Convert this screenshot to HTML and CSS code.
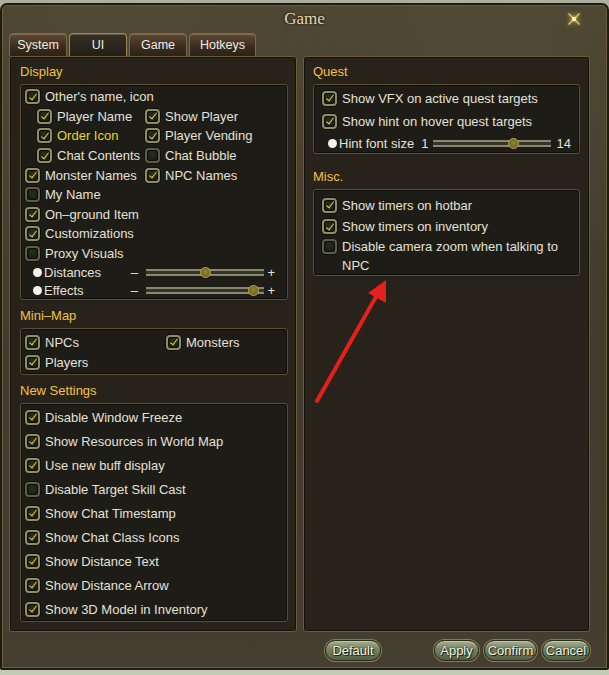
FILE: index.html
```html
<!DOCTYPE html>
<html lang="en">
  <head>
    <meta charset="UTF-8" />
    <meta name="viewport" content="width=device-width, initial-scale=1.0" />
    <title>Game</title>
    <link rel="stylesheet" href="styles.css">
  </head>
  <body>
    <div class="window">
      <div class="titlebar">
        <span class="title">Game</span>
        <svg class="close" width="16" height="16" viewBox="0 0 16 16">
          <path d="M3 3 L13 13 M13 3 L3 13" stroke="#d8c060" stroke-width="1.6" stroke-linecap="round" />
          <circle cx="8" cy="8" r="2.2" fill="#fff6c0" />
        </svg>
      </div>

      <div class="tabs">
        <div class="tab">System</div>
        <div class="tab active">UI</div>
        <div class="tab">Game</div>
        <div class="tab wide">Hotkeys</div>
      </div>

      <div class="content">
        <!-- left column -->
        <div class="panel">
          <h3>Display</h3>
          <div class="box display">
            <div class="row"><span class="cb on"></span>Other's name, icon</div>
            <div class="pair">
              <div class="row sub"><span class="cb on"></span>Player Name</div>
              <div class="row"><span class="cb on"></span>Show Player</div>
              <div class="row sub"><span class="cb on"></span><span class="hl">Order Icon</span></div>
              <div class="row"><span class="cb on"></span>Player Vending</div>
              <div class="row sub"><span class="cb on"></span>Chat Contents</div>
              <div class="row"><span class="cb"></span>Chat Bubble</div>
              <div class="row"><span class="cb on"></span>Monster Names</div>
              <div class="row"><span class="cb on"></span>NPC Names</div>
            </div>
            <div class="row"><span class="cb"></span>My Name</div>
            <div class="row"><span class="cb on"></span>On–ground Item</div>
            <div class="row"><span class="cb on"></span>Customizations</div>
            <div class="row"><span class="cb"></span>Proxy Visuals</div>
            <div class="slider-row">
              <span class="dot"></span><span class="s-label">Distances</span>
              <span class="sign">–</span>
              <span class="track"><span class="knob" style="left: 50%"></span></span>
              <span class="sign">+</span>
            </div>
            <div class="slider-row">
              <span class="dot"></span><span class="s-label">Effects</span>
              <span class="sign">–</span>
              <span class="track"><span class="knob" style="left: 90%"></span></span>
              <span class="sign">+</span>
            </div>
          </div>

          <h3>Mini–Map</h3>
          <div class="box minimap">
            <div class="row"><span class="cb on"></span>NPCs</div>
            <div class="row"><span class="cb on"></span>Monsters</div>
            <div class="row"><span class="cb on"></span>Players</div>
          </div>

          <h3>New Settings</h3>
          <div class="box settings">
            <div class="row"><span class="cb on"></span>Disable Window Freeze</div>
            <div class="row"><span class="cb on"></span>Show Resources in World Map</div>
            <div class="row"><span class="cb on"></span>Use new buff display</div>
            <div class="row"><span class="cb"></span>Disable Target Skill Cast</div>
            <div class="row"><span class="cb on"></span>Show Chat Timestamp</div>
            <div class="row"><span class="cb on"></span>Show Chat Class Icons</div>
            <div class="row"><span class="cb on"></span>Show Distance Text</div>
            <div class="row"><span class="cb on"></span>Show Distance Arrow</div>
            <div class="row"><span class="cb on"></span>Show 3D Model in Inventory</div>
          </div>
        </div>

        <!-- right column -->
        <div class="panel right">
          <h3>Quest</h3>
          <div class="box quest">
            <div class="row"><span class="cb on"></span>Show VFX on active quest targets</div>
            <div class="row"><span class="cb on"></span>Show hint on hover quest targets</div>
            <div class="slider-row">
              <span class="dot"></span><span class="s-label">Hint font size</span>
              <span class="num">1</span>
              <span class="track"><span class="knob" style="left: 68%"></span></span>
              <span class="num end">14</span>
            </div>
          </div>

          <h3 class="misc-title">Misc.</h3>
          <div class="box misc">
            <div class="row"><span class="cb on"></span>Show timers on hotbar</div>
            <div class="row"><span class="cb on"></span>Show timers on inventory</div>
            <div class="row wrap"><span class="cb"></span><span>Disable camera zoom when talking to NPC</span></div>
          </div>
        </div>
      </div>

      <div class="footer">
        <div></div>
        <div class="buttons">
          <button class="btn w-default">Default</button>
          <div class="btn-group">
            <button class="btn w-apply">Apply</button>
            <button class="btn w-confirm">Confirm</button>
            <button class="btn w-cancel">Cancel</button>
          </div>
        </div>
      </div>
    </div>

    <svg class="arrow" width="609" height="675" viewBox="0 0 609 675">
      <line x1="317" y1="401" x2="377" y2="295" stroke="#e5201c" stroke-width="4" stroke-linecap="round" />
      <polygon points="386,280 368,293 386,303" fill="#e5201c" />
    </svg>
  </body>
</html>
```

FILE: styles.css
```css
* {
  margin: 0;
  padding: 0;
  box-sizing: border-box;
}
body {
  width: 609px;
  height: 675px;
  overflow: hidden;
  position: relative;
  background: linear-gradient(#aab09c, #c4cab6);
  font-family: "Liberation Sans", Arial, sans-serif;
  font-size: 13px;
  color: #e4e1d6;
}
.window {
  margin-top: 3px;
  height: 667px;
  border: 2px solid #1f1b13;
  border-radius: 7px 7px 2px 2px;
  background:
    radial-gradient(ellipse at 20% 8%, rgba(90, 84, 62, 0.45), transparent 40%),
    radial-gradient(ellipse at 80% 8%, rgba(90, 84, 62, 0.45), transparent 40%),
    linear-gradient(#48422f, #403a2b 40%, #453f31);
  box-shadow: inset 0 0 0 1px #6a5e40;
  display: flex;
  flex-direction: column;
}
.titlebar {
  height: 28px;
  display: flex;
  align-items: center;
  justify-content: center;
  position: relative;
}
.title {
  font-family: "Liberation Serif", "Times New Roman", serif;
  font-size: 17px;
  color: #e6d6b2;
  text-shadow: 0 0 3px #000;
}
.close {
  position: absolute;
  right: 25px;
  top: 6px;
  filter: drop-shadow(0 0 2px #e0c040);
}

/* tabs */
.tabs {
  height: 23px;
  display: flex;
  gap: 2px;
  padding-left: 7px;
}
.tab {
  width: 58px;
  height: 23px;
  border: 1px solid #7b6741;
  border-bottom: none;
  border-radius: 4px 4px 0 0;
  background: linear-gradient(#5e4834, #3a2c1e 60%, #2c2217);
  display: flex;
  align-items: center;
  justify-content: center;
  font-size: 12.5px;
  color: #f1ede2;
  box-shadow: inset 0 1px 0 rgba(255, 220, 160, 0.25);
}
.tab.wide {
  width: 67px;
}
.tab.active {
  background: linear-gradient(#353024, #231f18);
  border-color: #9a8550;
}

/* panels */
.content {
  height: 576px;
  display: flex;
  gap: 6px;
  padding-left: 7px;
}
.panel {
  width: 288px;
  height: 576px;
  border: 1px solid #6d5c35;
  border-radius: 3px;
  background: #27231b;
  box-shadow: inset 0 0 0 1px #15120c;
  padding: 4px 8px 0 10px;
}
.panel.right {
  width: 287px;
  padding: 4px 9px 0 9px;
}
h3 {
  font-weight: normal;
  font-size: 13px;
  color: #f3c141;
  height: 22px;
  line-height: 22px;
  margin-top: 5px;
  margin-bottom: 1px;
}
h3:first-child {
  margin-top: 0;
}
.misc-title {
  margin-top: 12px;
}
.box {
  border: 1px solid #5a4f33;
  border-radius: 3px;
  background: #1e1c16;
  box-shadow: inset 0 0 0 1px #100e0a;
  padding: 2px 4px;
}
.display {
  padding-bottom: 0;
}
.row {
  display: flex;
  align-items: center;
  height: 19.6px;
  white-space: nowrap;
}
.pair {
  display: grid;
  grid-template-columns: 120px 1fr;
}
.row.sub {
  padding-left: 12px;
}
.hl {
  color: #e6d51e;
}

/* checkbox */
.cb {
  flex: none;
  width: 15px;
  height: 15px;
  margin-right: 5px;
  border: 2px solid #5e5e46;
  border-radius: 4px;
  background: radial-gradient(circle at 50% 40%, #283020, #12150e);
  box-shadow: 0 0 0 1px #12100b, inset 0 0 0 1px #0c0e08;
  position: relative;
}
.cb.on {
  border-color: #8e8d68;
}
.cb.on::after {
  content: "";
  position: absolute;
  left: 3.5px;
  top: 0.5px;
  width: 3px;
  height: 7px;
  border: solid #e7cb31;
  border-width: 0 1.6px 1.6px 0;
  transform: rotate(38deg);
}

/* sliders */
.slider-row {
  display: flex;
  align-items: center;
  height: 18px;
  white-space: nowrap;
}
.dot {
  flex: none;
  width: 9px;
  height: 9px;
  border-radius: 50%;
  background: #f4f2ea;
  margin-left: 8px;
  margin-right: 2px;
}
.display .s-label {
  width: 89px;
}
.sign {
  width: 16px;
}
.track {
  position: relative;
  width: 121px;
  height: 7px;
  border-top: 2px solid #8a876f;
  border-bottom: 2px solid #8a876f;
  background: #36342a;
}
.knob {
  position: absolute;
  top: 50%;
  width: 11px;
  height: 11px;
  margin-left: -5px;
  margin-top: -5.5px;
  border-radius: 50%;
  border: 1px solid #c6a548;
  background: radial-gradient(circle at 50% 45%, #8f8636, #5f5a1e);
}
.slider-row > .sign:last-child {
  margin-left: 3px;
}

/* mini-map */
.minimap {
  display: grid;
  grid-template-columns: 141px 1fr;
  padding-top: 3px;
  padding-bottom: 2px;
}
.minimap .row {
  height: 20px;
}

/* new settings */
.settings {
  padding-top: 1px;
  padding-bottom: 0;
}
.settings .row {
  height: 24px;
}

/* quest */
.quest {
  padding: 2px 8px 0;
}
.quest .row:first-child {
  height: 22px;
}
.quest .row {
  height: 24px;
}
.quest .slider-row {
  height: 20px;
}
.quest .dot {
  margin-left: 6px;
}
.quest .s-label {
  width: 84px;
}
.num {
  width: 12px;
}
.num.end {
  width: auto;
  margin-left: 6px;
}
.quest .track {
  width: 120px;
}

/* misc */
.misc {
  padding: 4px 8px 0;
}
.misc .row {
  height: 22px;
}
.misc .row:nth-child(2) {
  height: 21px;
}
.misc .row.wrap {
  height: auto;
  white-space: normal;
  align-items: flex-start;
  line-height: 19px;
}
.misc .row.wrap .cb {
  margin-top: 2px;
}

/* footer */
.footer {
  flex: 1;
  display: grid;
  grid-template-columns: 288px 287px;
  gap: 6px;
  padding-left: 7px;
  align-items: center;
}
.buttons {
  display: flex;
  align-items: center;
  padding-left: 22px;
}
.btn-group {
  margin-left: auto;
  display: flex;
  gap: 5px;
}
.btn {
  height: 21px;
  border: 1px solid #2c2a1a;
  border-radius: 11px;
  background: linear-gradient(#a3b090, #74845f 45%, #52603f);
  box-shadow: 0 0 0 1px #8c7b48, inset 0 1px 0 rgba(255, 255, 255, 0.3);
  font-family: inherit;
  font-size: 13px;
  color: #f2f4e6;
  text-shadow: 0 0 2px #1a1a10, 1px 1px 0 #2a2a18;
}
.w-default {
  width: 56px;
}
.w-apply {
  width: 45px;
}
.w-confirm {
  width: 53px;
}
.w-cancel {
  width: 48px;
}

.arrow {
  position: absolute;
  top: 0;
  left: 0;
  pointer-events: none;
}
```
